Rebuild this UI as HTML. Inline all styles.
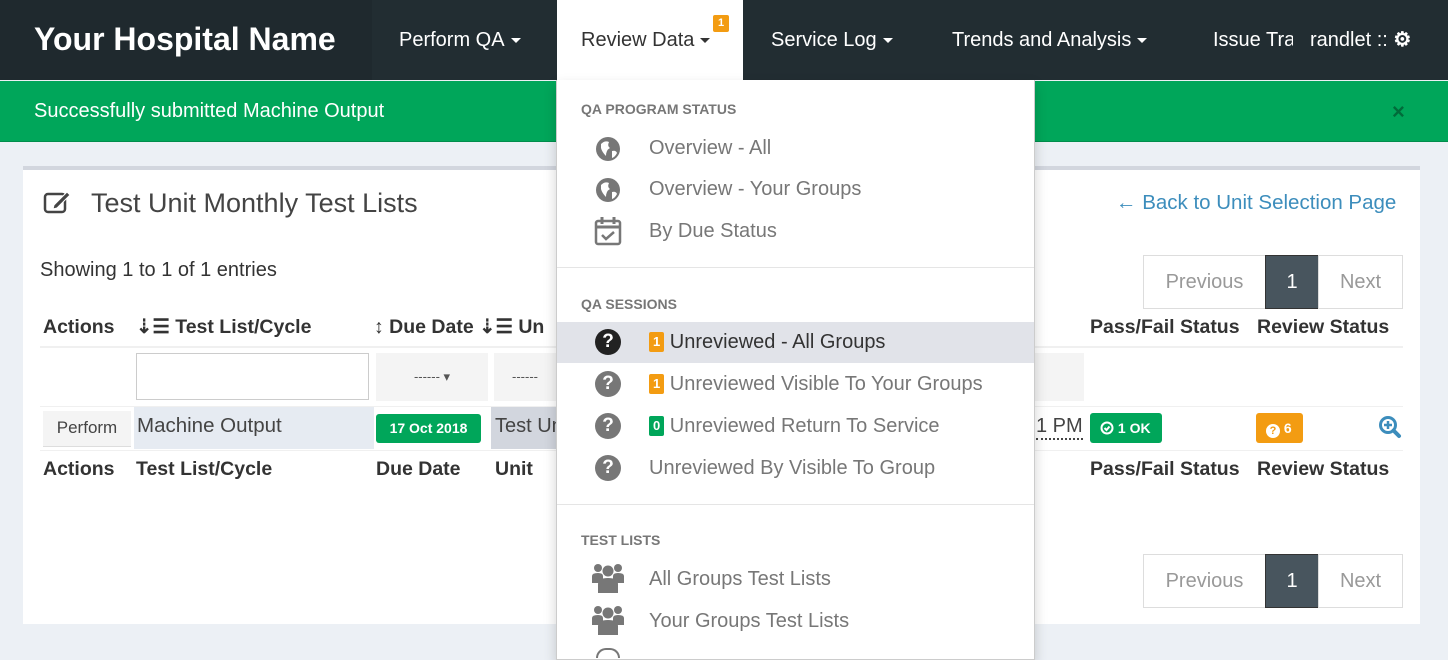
<!DOCTYPE html>
<html><head><meta charset="utf-8"><style>
*{margin:0;padding:0;box-sizing:border-box}
body{width:1448px;height:653px;overflow:hidden;background:#ecf0f5;font-family:"Liberation Sans",sans-serif;position:relative;color:#333}
.a{position:absolute;white-space:nowrap}
.caret{display:inline-block;width:0;height:0;border-left:5px solid transparent;border-right:5px solid transparent;border-top:5px solid currentColor;vertical-align:middle;margin-left:6px}
.nav{color:#fff;font-size:20px;line-height:24px}
.dd{color:#777;font-size:20px;line-height:24px}
.hd{color:#777;font-size:14px;font-weight:bold;line-height:18px}
.th{font-size:19.5px;font-weight:bold;color:#333;line-height:24px}
.lbl{display:inline-block;color:#fff;font-size:13px;font-weight:bold;padding:0 4px;border-radius:2px;line-height:20px;vertical-align:2px}
.q{position:absolute;width:26px;height:26px;border-radius:50%;background:#777;color:#fff;font-weight:bold;font-size:19px;text-align:center;line-height:26px}
.pg{position:absolute;height:54px;border:1px solid #ddd;background:#fff;color:#999;font-size:20px;text-align:center;line-height:52px}
</style></head><body>
<div class="a" style="left:0;top:0;width:1448px;height:80px;background:#222d32"></div>
<div class="a" style="left:0;top:0;width:372px;height:80px;background:#1f292e"></div>
<div class="a" style="left:34px;top:20px;color:#fff;font-size:32px;font-weight:bold;line-height:38px">Your Hospital Name</div>
<div class="a nav" style="left:399px;top:28px">Perform QA<span class="caret"></span></div>
<div class="a" style="left:557px;top:0;width:186px;height:81px;background:#fff"></div>
<div class="a nav" style="left:581px;top:28px;color:#333">Review Data<span class="caret"></span></div>
<div class="a" style="left:713px;top:15px;width:16px;height:17px;background:#f39c12;color:#fff;font-size:11px;font-weight:bold;text-align:center;line-height:17px;border-radius:2px">1</div>
<div class="a nav" style="left:771px;top:28px">Service Log<span class="caret"></span></div>
<div class="a nav" style="left:952px;top:28px">Trends and Analysis<span class="caret"></span></div>
<div class="a nav" style="left:1213px;top:28px;width:80px;overflow:hidden">Issue Tracker</div>
<div class="a nav" style="left:1310px;top:28px">randlet :: <b>⚙</b></div>
<div class="a" style="left:0;top:81px;width:1448px;height:61px;background:#00a65a;border-bottom:1px solid #008d4c"></div>
<div class="a" style="left:34px;top:99px;color:#fff;font-size:20px;line-height:24px">Successfully submitted Machine Output</div>
<div class="a" style="left:1392px;top:100px;color:#006b3a;font-size:22px;font-weight:bold;line-height:24px">×</div>
<div class="a" style="left:23px;top:166px;width:1397px;height:458px;background:#fff;border-top:4px solid #d2d6de"></div>
<svg class="a" style="left:43px;top:189px" width="30" height="26" viewBox="0 0 30 26"><rect x="2" y="5" width="20" height="18" rx="3" fill="none" stroke="#444" stroke-width="2.5"/><path d="M11 16 L24 3 L27 6 L14 19 L10 20Z" fill="#444" stroke="#fff" stroke-width="1"/></svg>
<div class="a" style="left:91px;top:188px;font-size:27px;color:#444;line-height:30px">Test Unit Monthly Test Lists</div>
<div class="a" style="left:1116px;top:191px;font-size:20.5px;color:#3c8dbc;line-height:24px">← Back to Unit Selection Page</div>
<div class="a" style="left:40px;top:258px;font-size:20px;line-height:24px">Showing 1 to 1 of 1 entries</div>
<div class="pg" style="left:1143px;top:255px;width:123px">Previous</div>
<div class="pg" style="left:1265px;top:255px;width:54px;background:#48555e;border-color:#333;color:#fff">1</div>
<div class="pg" style="left:1318px;top:255px;width:85px">Next</div>
<div class="pg" style="left:1143px;top:554px;width:123px">Previous</div>
<div class="pg" style="left:1265px;top:554px;width:54px;background:#48555e;border-color:#333;color:#fff">1</div>
<div class="pg" style="left:1318px;top:554px;width:85px">Next</div>
<div class="a th" style="left:43px;top:315px">Actions</div>
<div class="a th" style="left:136px;top:315px">⇣☰ Test List/Cycle</div>
<div class="a th" style="left:374px;top:315px">↕ Due Date ⇣☰ Un</div>
<div class="a th" style="left:1090px;top:315px">Pass/Fail Status</div>
<div class="a th" style="left:1257px;top:315px">Review Status</div>
<div class="a" style="left:40px;top:346px;width:1363px;height:2px;background:#f0f0f0"></div>
<div class="a" style="left:136px;top:353px;width:233px;height:47px;border:1px solid #ccc;background:#fff"></div>
<div class="a" style="left:376px;top:353px;width:112px;height:48px;background:#f4f4f4;text-align:center;line-height:48px;font-size:13px;color:#555">------ ▾</div>
<div class="a" style="left:494px;top:353px;width:63px;height:48px;background:#f4f4f4;line-height:48px;font-size:13px;color:#555;padding-left:18px">------</div>
<div class="a" style="left:1034px;top:353px;width:50px;height:48px;background:#f4f4f4"></div>
<div class="a" style="left:40px;top:406px;width:1363px;height:1px;background:#f0f0f0"></div>
<div class="a" style="left:134px;top:407px;width:240px;height:42px;background:#e6ebf2"></div>
<div class="a" style="left:491px;top:407px;width:66px;height:42px;background:#d2d6de"></div>
<div class="a" style="left:43px;top:411px;width:88px;height:36px;background:#f4f4f4;border-bottom:1px solid #ddd;color:#444;font-size:17px;text-align:center;line-height:34px">Perform</div>
<div class="a" style="left:137px;top:414px;font-size:20.5px;color:#444;line-height:24px">Machine Output</div>
<div class="a" style="left:376px;top:414px;width:105px;height:29px;background:#00a65a;border-radius:3px;color:#fff;font-weight:bold;font-size:14px;text-align:center;line-height:29px">17 Oct 2018</div>
<div class="a" style="left:495px;top:414px;font-size:20px;color:#444;line-height:24px;width:62px;overflow:hidden">Test Unit</div>
<div class="a" style="left:1036px;top:414px;font-size:20px;color:#444;line-height:24px;border-bottom:2px dotted #444">1 PM</div>
<div class="a" style="left:1090px;top:413px;width:72px;height:30px;background:#00a65a;border-radius:3px;color:#fff;font-weight:bold;font-size:14px;line-height:30px;padding-left:10px"><svg width="14" height="14" viewBox="0 0 14 14" style="vertical-align:-2px"><circle cx="7" cy="7" r="5.5" fill="none" stroke="#fff" stroke-width="2"/><path d="M4.5 7l2 2 3-3.5" fill="none" stroke="#fff" stroke-width="2"/></svg> 1 OK</div>
<div class="a" style="left:1256px;top:413px;width:47px;height:30px;background:#f39c12;border-radius:3px;color:#fff;font-weight:bold;font-size:14px;line-height:30px;padding-left:10px"><span style="display:inline-block;width:14px;height:14px;border-radius:50%;background:#fff;color:#f39c12;font-size:11px;line-height:14px;text-align:center;vertical-align:-1px">?</span> 6</div>
<svg class="a" style="left:1378px;top:415px" width="24" height="24" viewBox="0 0 24 24"><circle cx="10" cy="10" r="7.5" fill="none" stroke="#3c8dbc" stroke-width="3"/><path d="M15.5 15.5 L21 21" stroke="#3c8dbc" stroke-width="4" stroke-linecap="round"/><path d="M10 6v8M6 10h8" stroke="#3c8dbc" stroke-width="2.5"/></svg>
<div class="a" style="left:40px;top:450px;width:1363px;height:1px;background:#f0f0f0"></div>
<div class="a th" style="left:43px;top:457px">Actions</div>
<div class="a th" style="left:136px;top:457px">Test List/Cycle</div>
<div class="a th" style="left:376px;top:457px">Due Date</div>
<div class="a th" style="left:495px;top:457px">Unit</div>
<div class="a th" style="left:1090px;top:457px">Pass/Fail Status</div>
<div class="a th" style="left:1257px;top:457px">Review Status</div>
<div class="a" style="left:556px;top:80px;width:479px;height:580px;background:#fff;border:1px solid #ccc;border-top:none;box-shadow:0 6px 12px rgba(0,0,0,.18)"></div>
<div class="a hd" style="left:581px;top:100px">QA PROGRAM STATUS</div>
<svg class="a" style="left:595px;top:136px" width="26" height="26" viewBox="0 0 26 26"><circle cx="13" cy="13" r="12" fill="#777"/><path d="M6 8 Q10 4 14 6 Q12 10 15 12 Q11 14 11 20 Q7 16 6 12Z M17 15 Q21 14 22 17 Q20 21 17 22Z" fill="#fff"/></svg>
<div class="a dd" style="left:649px;top:136px">Overview - All</div>
<svg class="a" style="left:595px;top:177px" width="26" height="26" viewBox="0 0 26 26"><circle cx="13" cy="13" r="12" fill="#777"/><path d="M6 8 Q10 4 14 6 Q12 10 15 12 Q11 14 11 20 Q7 16 6 12Z M17 15 Q21 14 22 17 Q20 21 17 22Z" fill="#fff"/></svg>
<div class="a dd" style="left:649px;top:177px">Overview - Your Groups</div>
<svg class="a" style="left:594px;top:216px" width="28" height="30" viewBox="0 0 28 30"><rect x="2" y="5" width="24" height="23" rx="2" fill="none" stroke="#777" stroke-width="2.5"/><path d="M2 11h24M8 1v7M20 1v7" stroke="#777" stroke-width="3"/><path d="M8 19l4 4 8-7" fill="none" stroke="#777" stroke-width="2.5"/></svg>
<div class="a dd" style="left:649px;top:219px">By Due Status</div>
<div class="a" style="left:557px;top:267px;width:477px;height:1px;background:#e5e5e5"></div>
<div class="a hd" style="left:581px;top:295px">QA SESSIONS</div>
<div class="a" style="left:557px;top:322px;width:477px;height:41px;background:#e1e3e9"></div>
<div class="q" style="left:595px;top:329px;background:#222">?</div>
<div class="a dd" style="left:649px;top:330px;color:#333"><span class="lbl" style="background:#f39c12">1</span> Unreviewed - All Groups</div>
<div class="q" style="left:595px;top:371px">?</div>
<div class="a dd" style="left:649px;top:372px"><span class="lbl" style="background:#f39c12">1</span> Unreviewed Visible To Your Groups</div>
<div class="q" style="left:595px;top:413px">?</div>
<div class="a dd" style="left:649px;top:414px"><span class="lbl" style="background:#00a65a">0</span> Unreviewed Return To Service</div>
<div class="q" style="left:595px;top:455px">?</div>
<div class="a dd" style="left:649px;top:456px">Unreviewed By Visible To Group</div>
<div class="a" style="left:557px;top:504px;width:477px;height:1px;background:#e5e5e5"></div>
<div class="a hd" style="left:581px;top:531px">TEST LISTS</div>
<svg class="a" style="left:591px;top:563px" width="34" height="32" viewBox="0 0 34 32"><g fill="#777"><circle cx="7" cy="5" r="4"/><circle cx="27" cy="5" r="4"/><circle cx="17" cy="8" r="5.5"/><path d="M1 13 Q1 10 7 10 Q12 10 12 13 V20 H1Z M22 13 Q22 10 27 10 Q33 10 33 13 V20 H22Z"/><path d="M7 21 Q7 15 17 15 Q27 15 27 21 V30 H7Z"/></g></svg>
<div class="a dd" style="left:649px;top:567px">All Groups Test Lists</div>
<svg class="a" style="left:591px;top:605px" width="34" height="32" viewBox="0 0 34 32"><g fill="#777"><circle cx="7" cy="5" r="4"/><circle cx="27" cy="5" r="4"/><circle cx="17" cy="8" r="5.5"/><path d="M1 13 Q1 10 7 10 Q12 10 12 13 V20 H1Z M22 13 Q22 10 27 10 Q33 10 33 13 V20 H22Z"/><path d="M7 21 Q7 15 17 15 Q27 15 27 21 V30 H7Z"/></g></svg>
<div class="a dd" style="left:649px;top:609px">Your Groups Test Lists</div>
<div class="a" style="left:596px;top:648px;width:24px;height:10px;border:2px solid #777;border-bottom:none;border-radius:12px 12px 0 0"></div>
</body></html>
